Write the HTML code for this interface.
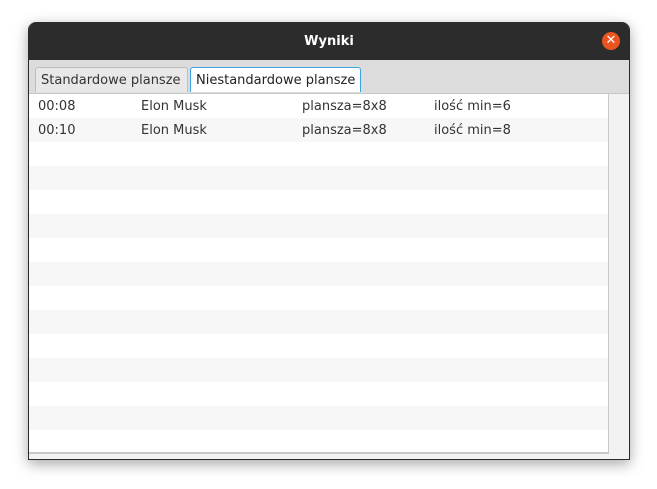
<html><head><style>
body{margin:0;width:657px;height:489px;background:#fff;position:relative;overflow:hidden;font-family:"DejaVu Sans","Liberation Sans",sans-serif;}
.win{position:absolute;left:28px;top:22px;width:600px;height:437px;border:1px solid #2a2a2a;border-top:none;border-radius:8px 8px 0 0;background:#f2f2f2;box-shadow:0 4px 14px rgba(0,0,0,.35);overflow:hidden}
.title{height:38px;background:#2c2c2c;color:#fff;font-weight:bold;font-size:13px;text-align:center;line-height:40px}
.close{position:absolute;left:573px;top:10px;width:18px;height:18px;border-radius:50%;background:#e95420;color:#fff;font-size:13px;line-height:18px;text-align:center}
.tabs{height:33px;background:#dcdcdc;border-bottom:1px solid #c8c8c8;position:relative}
.tab{position:absolute;top:7px;height:25px;border:1px solid #bdbdbd;border-bottom:none;border-radius:3px 3px 0 0;font-size:13px;line-height:25px;padding:0 5px;color:#333;background:#e8e8e8;box-sizing:border-box;white-space:nowrap;overflow:hidden}
.t2{background:#fff;border:1px solid #3aa3e3;border-bottom:none;color:#222}
.list{position:absolute;left:0;top:72px;width:579px;height:358px;background:#fff;border-right:1px solid #c8c8c8;border-bottom:2px solid #c8c8c8;overflow:hidden}
.row{height:24px;font-size:13px;line-height:26px;color:#333;position:relative}
.row:nth-child(even){background:#f7f7f7}
.row span{position:absolute}
</style></head><body>
<div class="win">
<div class="title">Wyniki</div><div class="close">✕</div>
<div class="tabs"><div class="tab" style="left:6px;width:153px">Standardowe plansze</div><div class="tab t2" style="left:161px;width:171px">Niestandardowe plansze</div></div>
<div class="list">
<div class="row"><span style="left:9px">00:08</span><span style="left:112px">Elon Musk</span><span style="left:273px">plansza=8x8</span><span style="left:405px">ilość min=6</span></div>
<div class="row"><span style="left:9px">00:10</span><span style="left:112px">Elon Musk</span><span style="left:273px">plansza=8x8</span><span style="left:405px">ilość min=8</span></div>
<div class="row"></div><div class="row"></div><div class="row"></div><div class="row"></div><div class="row"></div><div class="row"></div><div class="row"></div><div class="row"></div><div class="row"></div><div class="row"></div><div class="row"></div><div class="row"></div><div class="row"></div>
</div>
</div>
</body></html>
